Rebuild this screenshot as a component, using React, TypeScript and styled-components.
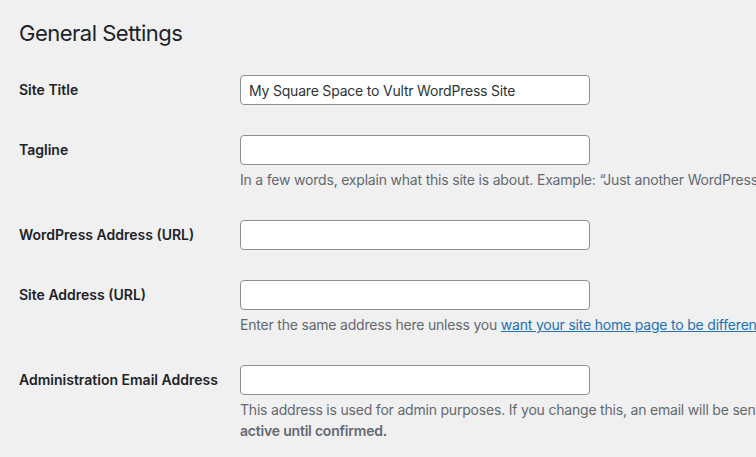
import styled, { createGlobalStyle } from 'styled-components';

const GlobalStyle = createGlobalStyle`
  html, body {
    margin: 0;
    padding: 0;
    background: #f0f0f1;
    overflow: hidden;
  }
  body {
    font-family: Inter, "Liberation Sans", sans-serif;
    color: #1d2327;
    font-size: 14px;
  }
`;

const Wrap = styled.div`
  padding: 18px 0 0 19px;
  width: 1300px;
`;

const Title = styled.h1`
  font-size: 22px;
  font-weight: 400;
  letter-spacing: -0.5px;
  line-height: 30px;
  margin: 0 0 12px;
  color: #1d2327;
`;

const FormTable = styled.div`
  display: flex;
  flex-direction: column;
`;

const Row = styled.div`
  display: grid;
  grid-template-columns: 221px 1000px;
  align-items: start;
`;

const Label = styled.label`
  font-weight: 600;
  font-size: 14px;
  line-height: 18px;
  padding: 21px 0 20px;
  color: #1d2327;
`;

const Field = styled.div`
  padding: 15px 0;
`;

const Input = styled.input`
  box-sizing: border-box;
  width: 350px;
  height: 30px;
  padding: 0 8px;
  border: 1px solid #8c8f94;
  border-radius: 4px;
  background: #fff;
  font-family: inherit;
  font-size: 14px;
  letter-spacing: -0.2px;
  color: #2c3338;
  display: block;
  outline: none;
`;

const Description = styled.p`
  margin: 4px 0 0;
  font-size: 14px;
  letter-spacing: -0.2px;
  line-height: 21px;
  color: #646970;

  a {
    color: #2271b1;
    text-decoration: underline;
  }

  strong {
    font-weight: 600;
  }
`;

export default function App() {
  return (
    <>
      <GlobalStyle />
      <Wrap>
        <Title>General Settings</Title>
        <FormTable>
          <Row>
            <Label>Site Title</Label>
            <Field>
              <Input defaultValue="My Square Space to Vultr WordPress Site" />
            </Field>
          </Row>
          <Row>
            <Label>Tagline</Label>
            <Field>
              <Input />
              <Description>
                In a few words, explain what this site is about. Example: “Just another WordPress site.”
              </Description>
            </Field>
          </Row>
          <Row>
            <Label>WordPress Address (URL)</Label>
            <Field>
              <Input />
            </Field>
          </Row>
          <Row>
            <Label>Site Address (URL)</Label>
            <Field>
              <Input />
              <Description>
                Enter the same address here unless you{' '}
                <a href="#">want your site home page to be different from your WordPress installation directory</a>.
              </Description>
            </Field>
          </Row>
          <Row>
            <Label>Administration Email Address</Label>
            <Field>
              <Input />
              <Description>
                This address is used for admin purposes. If you change this, an email will be sent to your new address to confirm it.{' '}
                <strong>The new address will not become active until confirmed.</strong>
              </Description>
            </Field>
          </Row>
        </FormTable>
      </Wrap>
    </>
  );
}
